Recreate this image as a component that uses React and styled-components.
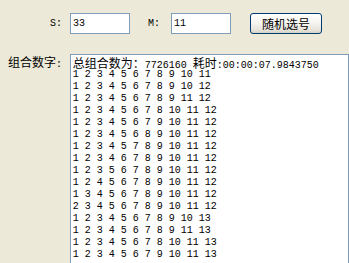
import React from "react";
import styled, { createGlobalStyle } from "styled-components";

const GlobalStyle = createGlobalStyle`
  html, body {
    margin: 0;
    padding: 0;
    background: #ece9d8;
    overflow: hidden;
  }
`;

const mono = `"Liberation Mono", "DejaVu Sans Mono", monospace`;
const cjk = `"Noto Sans CJK SC", sans-serif`;

const Window = styled.div`
  width: 349px;
  height: 263px;
  background: #ece9d8;
  font-family: ${mono};
  font-size: 10px;
  color: #000;
  overflow: hidden;
`;

const TopBar = styled.div`
  display: flex;
  align-items: center;
  padding: 13px 0 0 50px;
  height: 21px;
`;

const FieldLabel = styled.span`
  width: ${(p) => p.$width}px;
  margin-left: ${(p) => p.$gap || 0}px;
  line-height: 21px;
`;

const NumberInput = styled.div`
  box-sizing: border-box;
  width: 60px;
  height: 21px;
  border: 1px solid #7f9db9;
  background: #fff;
  padding: 0 2px;
  line-height: 19px;
`;

const AsciiRun = styled.span`
  display: inline-block;
  width: ${(p) => p.$w}px;
  font-family: ${mono};
  font-size: 10px;
  line-height: 12px;
  white-space: pre;
`;

const CjkRun = styled.span`
  display: inline-block;
  width: ${(p) => p.$w}px;
  font-family: ${cjk};
  font-size: 12px;
  line-height: 12px;
  white-space: pre;
`;

const ActionButton = styled.button`
  box-sizing: border-box;
  margin-left: 19px;
  width: 72px;
  height: 21px;
  padding: 0;
  border: 1px solid #003c74;
  border-radius: 3px;
  background: linear-gradient(#ffffff 0%, #f6f5f1 45%, #e6e3da 85%, #d6d0c5 100%);
  font-family: ${cjk};
  font-size: 12px;
  color: #000;
  line-height: 19px;
`;

const ResultRow = styled.div`
  display: flex;
  align-items: flex-start;
  margin-top: 20px;
`;

const ResultLabel = styled.div`
  width: 64px;
  padding: 2px 0 0 8px;
  height: 12px;
  line-height: 12px;
  white-space: nowrap;
`;

const ResultBox = styled.div`
  box-sizing: border-box;
  width: 290px;
  height: 230px;
  border: 1px solid #7f9db9;
  background: #fff;
  padding: 2px 0 0 2px;
  overflow: hidden;
`;

const Line = styled.div`
  height: 12px;
  line-height: 12px;
  white-space: pre;
`;

const rows = [
  "1 2 3 4 5 6 7 8 9 10 11",
  "1 2 3 4 5 6 7 8 9 10 12",
  "1 2 3 4 5 6 7 8 9 11 12",
  "1 2 3 4 5 6 7 8 10 11 12",
  "1 2 3 4 5 6 7 9 10 11 12",
  "1 2 3 4 5 6 8 9 10 11 12",
  "1 2 3 4 5 7 8 9 10 11 12",
  "1 2 3 4 6 7 8 9 10 11 12",
  "1 2 3 5 6 7 8 9 10 11 12",
  "1 2 4 5 6 7 8 9 10 11 12",
  "1 3 4 5 6 7 8 9 10 11 12",
  "2 3 4 5 6 7 8 9 10 11 12",
  "1 2 3 4 5 6 7 8 9 10 13",
  "1 2 3 4 5 6 7 8 9 11 13",
  "1 2 3 4 5 6 7 8 10 11 13",
  "1 2 3 4 5 6 7 9 10 11 13",
];

const wide = /[\u3000-\u9fff\uff00-\uffef]/;

// split text into runs: full-width glyphs take 12px each, the rest 6px
function mixed(text) {
  const runs = [];
  for (const ch of text) {
    const isWide = wide.test(ch);
    const last = runs[runs.length - 1];
    if (last && last.wide === isWide) last.text += ch;
    else runs.push({ wide: isWide, text: ch });
  }
  return runs.map((r, i) =>
    r.wide ? (
      <CjkRun key={i} $w={r.text.length * 12}>
        {r.text}
      </CjkRun>
    ) : (
      <AsciiRun key={i} $w={r.text.length * 6}>
        {r.text}
      </AsciiRun>
    )
  );
}

export default function App() {
  return (
    <>
      <GlobalStyle />
      <Window>
        <TopBar>
          <FieldLabel $width={20}>S:</FieldLabel>
          <NumberInput>33</NumberInput>
          <FieldLabel $width={23} $gap={18}>M:</FieldLabel>
          <NumberInput>11</NumberInput>
          <ActionButton>随机选号</ActionButton>
        </TopBar>
        <ResultRow>
          <ResultLabel>{mixed("组合数字:")}</ResultLabel>
          <ResultBox>
            <Line>{mixed("总组合数为：7726160 耗时:00:00:07.9843750")}</Line>
            {rows.map((r) => (
              <Line key={r}>{r}</Line>
            ))}
          </ResultBox>
        </ResultRow>
      </Window>
    </>
  );
}
